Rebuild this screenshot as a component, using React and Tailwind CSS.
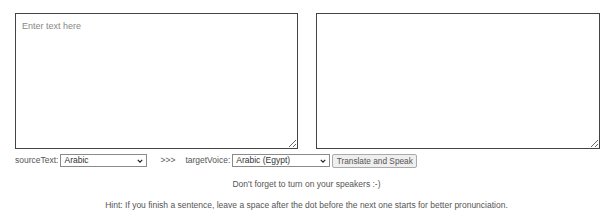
function Chevron() {
  return (
    <svg
      viewBox="0 0 8 5"
      className="pointer-events-none absolute right-[4px] top-1/2 h-[4px] w-[6px] -translate-y-1/2"
      fill="none"
      stroke="#222"
      strokeWidth="1.6"
    >
      <path d="M1 1l3 3 3-3" />
    </svg>
  );
}

function Select({ width, value }) {
  return (
    <div className={`relative ml-[2px] ${width}`}>
      <select className="block h-[13px] w-full appearance-none border border-[#8a8a8a] bg-white pl-[3px] text-[8.5px] leading-[11px] text-[#333] outline-none">
        <option>{value}</option>
      </select>
      <Chevron />
    </div>
  );
}

export default function App() {
  return (
    <div className="w-[613px] h-[220px] bg-white font-['Liberation_Sans',Arial,sans-serif] text-[#555]">
      <div className="ml-[15px] w-[585px] pt-[13px]">
        <div className="flex gap-[18px]">
          <textarea
            placeholder="Enter text here"
            className="block h-[136px] w-[283px] resize-y border border-[#444] px-[6px] py-[6px] text-[9px] text-[#333] placeholder:text-[#888] outline-none"
          />
          <textarea className="block h-[136px] w-[284px] resize-y border border-[#444] px-[6px] py-[6px] text-[9px] text-[#333] outline-none" />
        </div>
        <div className="mt-[5px] flex h-[13px] items-center text-[8.5px]">
          <span>sourceText:</span>
          <Select width="w-[87px]" value="Arabic" />
          <span className="ml-[13px]">&gt;&gt;&gt;</span>
          <span className="ml-[10px]">targetVoice:</span>
          <Select width="w-[98px]" value="Arabic (Egypt)" />
          <button className="ml-[2px] h-[14px] w-[85px] rounded-[2px] border border-[#aaa] bg-[#efefef] text-[8.3px] text-[#555]">
            Translate and Speak
          </button>
        </div>
      </div>
      <p className="mt-[12px] text-center text-[8.5px] leading-[11px]">Don't forget to turn on your speakers :-)</p>
      <p className="mt-[10px] text-center text-[8.5px] leading-[11px]">
        Hint: If you finish a sentence, leave a space after the dot before the next one starts for better pronunciation.
      </p>
    </div>
  );
}
